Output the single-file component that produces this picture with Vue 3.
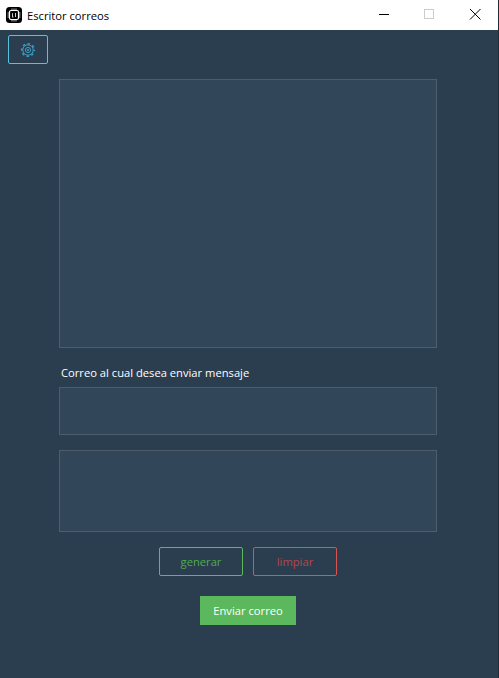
<template>
  <div class="window">
    <header class="titlebar">
      <div class="title-left">
        <svg class="app-icon" width="16" height="16" viewBox="0 0 16 16">
          <rect width="16" height="16" rx="3.5" fill="#000" />
          <rect x="3.5" y="3.5" width="9" height="9" rx="1.5" fill="#000" stroke="#fff" stroke-width="1.2" />
          <path d="M6.5 6.2v3.6M9.5 6v4M6 10h1.5M1.5 6h2M1.5 8h2M1.5 10h2M12.5 6h2M12.5 8h2M12.5 10h2M6 1.5v2M8 1.5v2M10 1.5v2M6 12.5v2M8 12.5v2M10 12.5v2" stroke="#fff" stroke-width=".8" />
        </svg>
        <span>Escritor correos</span>
      </div>
      <div class="title-buttons">
        <svg width="12" height="12" viewBox="0 0 12 12"><path d="M0 5.5h10" stroke="#000" /></svg>
        <svg width="12" height="12" viewBox="0 0 12 12"><rect x=".5" y=".5" width="9" height="9" fill="none" stroke="#ccc" /></svg>
        <svg width="12" height="12" viewBox="0 0 12 12"><path d="M1 0l10.500 10.500M11.500 0L1 10.500" stroke="#000" /></svg>
      </div>
    </header>

    <main class="content">
      <div class="toolbar">
        <button class="settings" type="button">
          <svg width="16" height="16" viewBox="0 0 16 16" fill="none" stroke="#3a9fc4">
            <circle cx="8" cy="8" r="5.2" stroke-width="1" />
            <circle cx="8" cy="8" r="6.3" stroke-width="1.5" stroke-dasharray="2.4 2.55" stroke-dashoffset="1.2" />
            <circle cx="8" cy="8" r="2.6" stroke-width="1" />
            <circle cx="8" cy="8" r="1" fill="#3a9fc4" stroke="none" />
          </svg>
        </button>
      </div>

      <div class="form">
        <div class="field preview"></div>
        <label class="label">Correo al cual desea enviar mensaje</label>
        <div class="field email"></div>
        <div class="field message"></div>
        <div class="actions">
          <button class="outline green" type="button">generar</button>
          <button class="outline red" type="button">limpiar</button>
        </div>
        <button class="send" type="button">Enviar correo</button>
      </div>
    </main>
  </div>
</template>

<script setup>
</script>

<style>
html, body {
  margin: 0;
  background: #2b3e50;
}
</style>

<style scoped>
.window {
  width: 499px;
  height: 678px;
  box-sizing: border-box;
  border-right: 1px solid #1f2b37;
  display: flex;
  flex-direction: column;
  font-family: "Open Sans", "Noto Sans", sans-serif;
  font-size: 11.2px;
  overflow: hidden;
}
.titlebar {
  height: 30px;
  flex: none;
  background: #fff;
  color: #000;
  display: flex;
  align-items: center;
  justify-content: space-between;
}
.title-left {
  display: flex;
  align-items: center;
  gap: 5px;
  padding-left: 6px;
  font-size: 11.2px;
}
.title-buttons {
  display: flex;
  gap: 33px;
  padding-right: 17px;
  align-items: center;
}
.title-buttons svg {
  display: block;
}
.content {
  flex: 1;
  background: #2b3e50;
  padding: 5px 8px 0;
}
.toolbar {
  display: flex;
}
.settings {
  width: 40px;
  height: 29px;
  padding: 0;
  background: transparent;
  border: 1px solid #5bc0de;
  border-radius: 2px;
  display: flex;
  align-items: center;
  justify-content: center;
}
.form {
  width: 378px;
  margin: 15px 0 0 51px;
  display: flex;
  flex-direction: column;
  align-items: center;
}
.field {
  width: 100%;
  box-sizing: border-box;
  background: #32465a;
  border: 1px solid #4e5d6c;
}
.preview {
  height: 269px;
}
.label {
  align-self: flex-start;
  margin: 15px 0 5px 2px;
  height: 19px;
  line-height: 19px;
  color: #fff;
  font-size: 11.2px;
}
.email {
  height: 48px;
}
.message {
  height: 82px;
  margin-top: 15px;
}
.actions {
  display: flex;
  gap: 10px;
  margin-top: 15px;
}
button {
  font-family: inherit;
  font-size: 11.2px;
}
.outline {
  width: 84px;
  height: 29px;
  padding: 0;
  background: transparent;
  border-radius: 2px;
}
.green {
  border: 1px solid #5cb85c;
  color: #4cae4c;
}
.red {
  border: 1px solid #d9534f;
  color: #b5474c;
}
.send {
  width: 96px;
  height: 29px;
  margin-top: 20px;
  padding: 0;
  background: #5cb85c;
  border: none;
  color: #fff;
}
</style>
